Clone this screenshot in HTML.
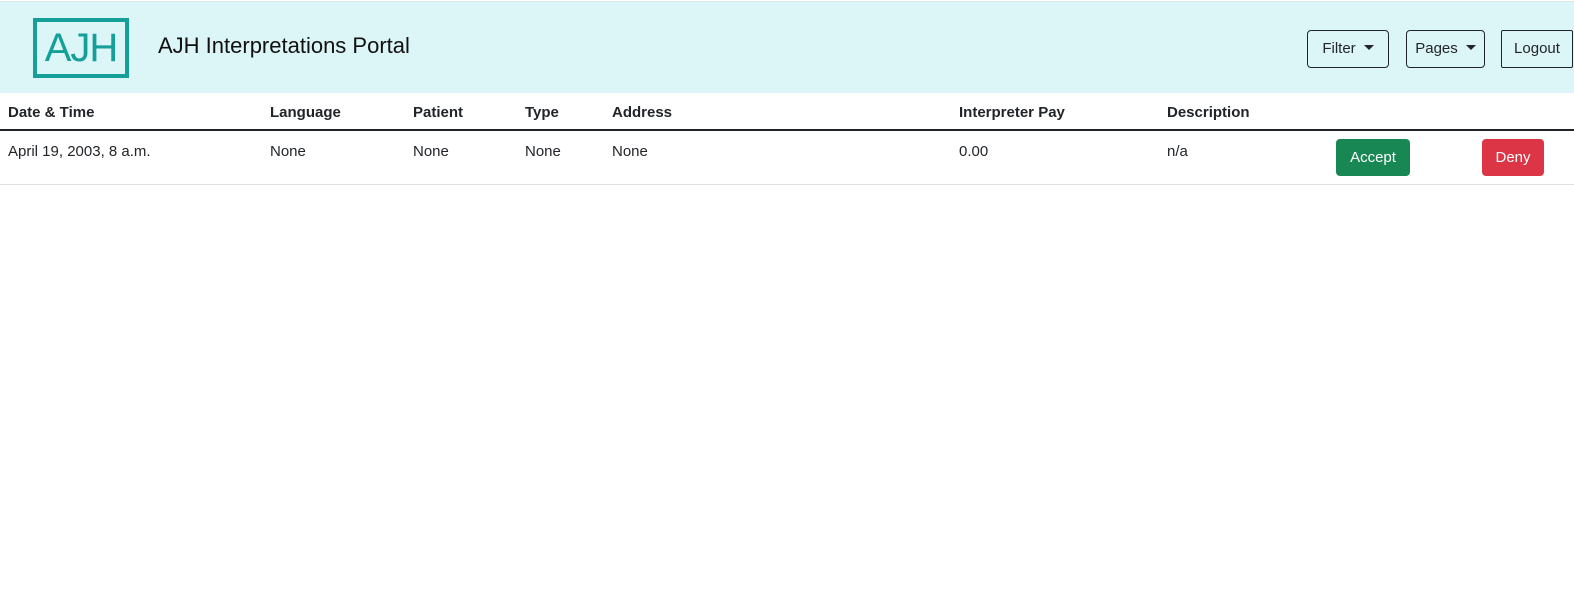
<!DOCTYPE html><html><head><style>
body{margin:0;width:1574px;height:613px;background:#fff;font-family:"Liberation Sans",sans-serif;color:#212529;overflow:hidden}
.hdr{position:absolute;top:1px;left:0;width:1574px;height:91px;background:#dcf5f7;border-top:1px solid #dee2e6}
.logo{position:absolute;left:33px;top:16px;width:88px;height:52px;border:4px solid #14a098;color:#14a098;font-size:40px;line-height:52px;text-align:center;letter-spacing:-1px}
.title{position:absolute;left:158px;top:31px;font-size:22px;color:#111}
.btn{position:absolute;top:28px;height:36px;border:1px solid #212529;border-radius:4px;font-size:15px;line-height:36px;text-align:center;box-sizing:content-box}
.car{display:inline-block;margin-left:8px;border-left:5px solid transparent;border-right:5px solid transparent;border-top:5px solid #212529;vertical-align:3px}
.th{position:absolute;top:104px;font-weight:bold;font-size:15px}
.td{position:absolute;top:143px;font-size:15px}
.ab{position:absolute;top:139px;height:37px;line-height:37px;color:#fff;border-radius:4px;text-align:center;font-size:15px}
</style></head><body>
<div class="hdr">
<div class="logo">AJH</div>
<div class="title">AJH Interpretations Portal</div>
<div class="btn" style="left:1307px;width:80px">Filter<span class="car"></span></div>
<div class="btn" style="left:1406px;width:77px">Pages<span class="car"></span></div>
<div class="btn" style="left:1501px;width:70px;border-radius:2px">Logout</div>
</div>
<div class="th" style="left:8px">Date &amp; Time</div>
<div class="th" style="left:270px">Language</div>
<div class="th" style="left:413px">Patient</div>
<div class="th" style="left:525px">Type</div>
<div class="th" style="left:612px">Address</div>
<div class="th" style="left:959px">Interpreter Pay</div>
<div class="th" style="left:1167px">Description</div>
<div style="position:absolute;top:129px;left:0;width:1574px;height:2px;background:#212529"></div>
<div class="td" style="left:8px">April 19, 2003, 8 a.m.</div>
<div class="td" style="left:270px">None</div>
<div class="td" style="left:413px">None</div>
<div class="td" style="left:525px">None</div>
<div class="td" style="left:612px">None</div>
<div class="td" style="left:959px">0.00</div>
<div class="td" style="left:1167px">n/a</div>
<div class="ab" style="left:1336px;width:74px;background:#198754">Accept</div>
<div class="ab" style="left:1482px;width:62px;background:#dc3545">Deny</div>
<div style="position:absolute;top:184px;left:0;width:1574px;height:1px;background:#dee2e6"></div>
</body></html>
